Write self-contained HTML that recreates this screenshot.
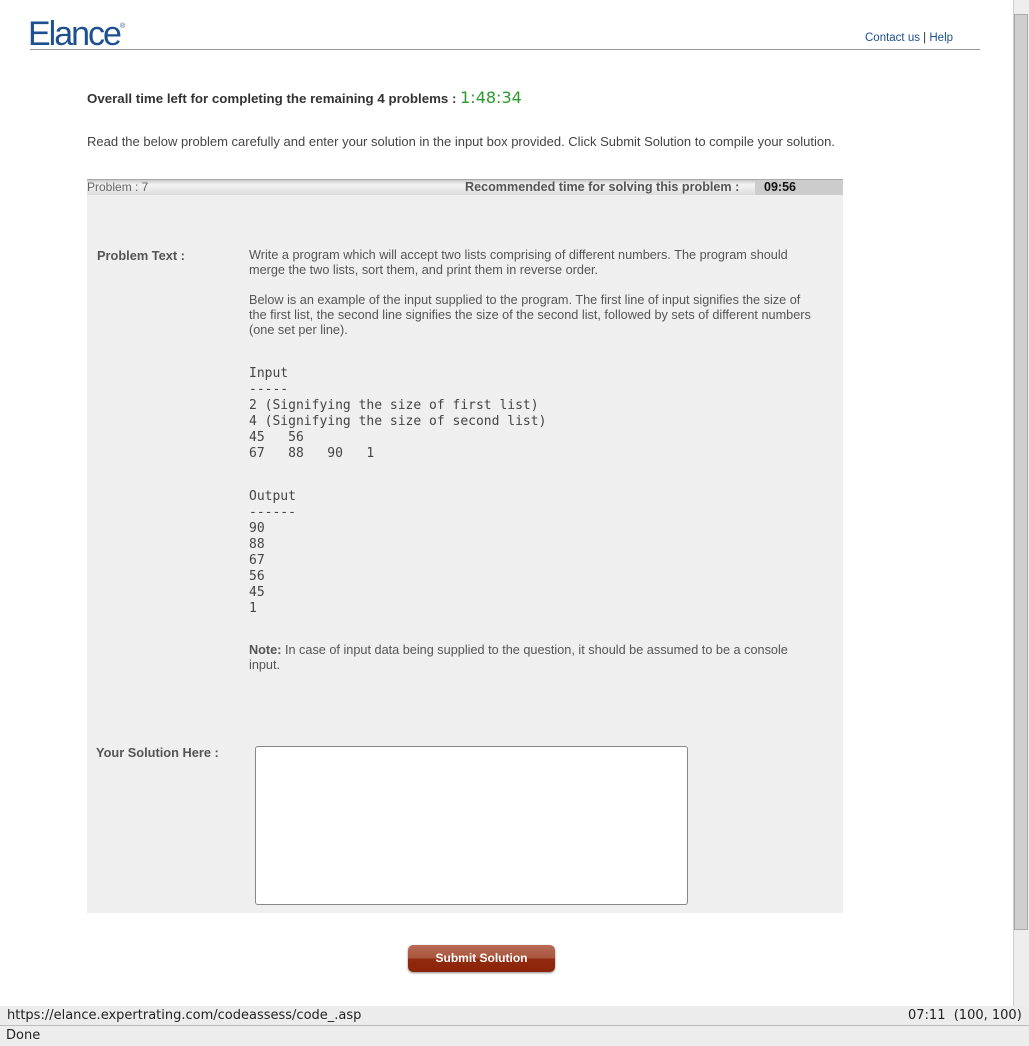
<!DOCTYPE html>
<html><head><style>
body{margin:0;width:1029px;height:1046px;position:relative;overflow:hidden;background:#fff;font-family:"Liberation Sans",sans-serif;color:#444}
.a{position:absolute}
.mono{font-family:"DejaVu Sans Mono","Liberation Mono",monospace;font-size:13px;line-height:16px;color:#444;white-space:pre}
.t{font-size:12.7px;line-height:15px;color:#555;white-space:nowrap}
</style></head><body>
<div class="a" style="left:28px;top:15px;font-size:34px;letter-spacing:-2px;color:#1d4f91">Elance<span style="font-size:7px;vertical-align:top;letter-spacing:0;position:relative;top:8px">®</span></div>
<div class="a" style="left:865px;top:32px;font-size:11.5px;color:#1d4f91">Contact us <span style="color:#333">|</span> Help</div>
<div class="a" style="left:30px;top:49px;width:950px;height:1px;background:#999"></div>
<div class="a" style="left:87px;top:88px;font-size:13.3px;font-weight:bold;color:#333">Overall time left for completing the remaining 4 problems : <span style="font-weight:normal;color:#2a9a2a;font-size:16px;font-family:'DejaVu Sans',sans-serif">1:48:34</span></div>
<div class="a" style="left:87px;top:134px;font-size:13px;color:#444">Read the below problem carefully and enter your solution in the input box provided. Click Submit Solution to compile your solution.</div>
<div class="a" style="left:87px;top:179px;width:756px;height:734px;background:#efefef"></div>
<div class="a" style="left:87px;top:179px;width:756px;height:16px;background:linear-gradient(#c8c8c8,#f4f4f4 30%,#dcdcdc);border-top:1px solid #aaa;box-sizing:border-box"></div>
<div class="a" style="left:755px;top:180px;width:88px;height:15px;background:#ccc"></div>
<div class="a" style="left:87px;top:180px;font-size:12px;color:#666">Problem : 7</div>
<div class="a" style="left:465px;top:180px;font-size:12.6px;font-weight:bold;color:#555">Recommended time for solving this problem :</div>
<div class="a" style="left:764px;top:180px;font-size:12.5px;font-weight:bold;color:#111">09:56</div>
<div class="a" style="left:97px;top:248px;font-size:12.8px;font-weight:bold;color:#555">Problem Text :</div>
<div class="a t" style="left:249px;top:248px">Write a program which will accept two lists comprising of different numbers. The program should<br>merge the two lists, sort them, and print them in reverse order.</div>
<div class="a t" style="left:249px;top:293px">Below is an example of the input supplied to the program. The first line of input signifies the size of<br>the first list, the second line signifies the size of the second list, followed by sets of different numbers<br>(one set per line).</div>
<div class="a mono" style="left:249px;top:366px">Input
-----
2 (Signifying the size of first list)
4 (Signifying the size of second list)
45   56
67   88   90   1</div>
<div class="a mono" style="left:249px;top:489px">Output
------
90
88
67
56
45
1</div>
<div class="a t" style="left:249px;top:643px"><b>Note:</b> In case of input data being supplied to the question, it should be assumed to be a console<br>input.</div>
<div class="a" style="left:96px;top:745px;font-size:12.8px;font-weight:bold;color:#555">Your Solution Here :</div>
<div class="a" style="left:255px;top:746px;width:433px;height:159px;background:#fff;border:1px solid #888;border-radius:3px;box-sizing:border-box"></div>
<div class="a" style="left:408px;top:945px;width:147px;height:27px;border-radius:5px;background:linear-gradient(#b86a55,#a9573e 48%,#922a10 52%,#8a2308);box-shadow:0 1px 2px #888;color:#fff;font-size:12px;font-weight:bold;text-align:center;line-height:26px">Submit Solution</div>
<div class="a" style="left:1013px;top:0;width:16px;height:1006px;background:#eee;border-left:1px solid #ccc;box-sizing:border-box"></div>
<div class="a" style="left:1014px;top:14px;width:14px;height:916px;background:#cfcfcf;border:1px solid #aaa;box-sizing:border-box"></div>
<div class="a" style="left:0;top:1006px;width:1029px;height:20px;background:#ececec;border-bottom:1px solid #bbb;box-sizing:border-box"></div>
<div class="a" style="left:7px;top:1008px;font-size:13px;color:#222;font-family:'DejaVu Sans',sans-serif">https://elance.expertrating.com/codeassess/code_.asp</div>
<div class="a" style="left:908px;top:1008px;font-size:13px;color:#222;font-family:'DejaVu Sans',sans-serif">07:11&nbsp; (100, 100)</div>
<div class="a" style="left:0;top:1026px;width:1029px;height:20px;background:#ededed"></div>
<div class="a" style="left:6px;top:1028px;font-size:13px;color:#222;font-family:'DejaVu Sans',sans-serif">Done</div>
</body></html>
